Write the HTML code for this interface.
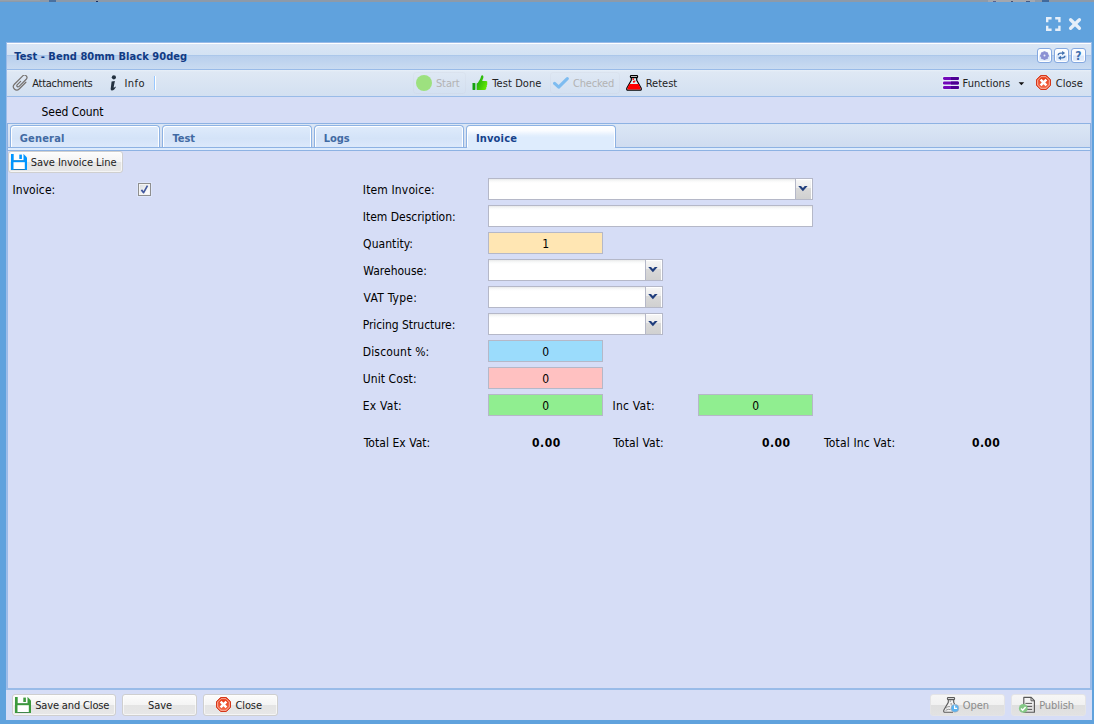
<!DOCTYPE html>
<html>
<head>
<meta charset="utf-8">
<title>Test - Bend 80mm Black 90deg</title>
<style>
html,body{margin:0;padding:0;}
body{width:1094px;height:724px;overflow:hidden;background:#60a2dd;position:relative;
  font-family:"Liberation Sans",sans-serif;font-size:12px;color:#000;}
div,svg{position:absolute;box-sizing:border-box;}
.tx{white-space:nowrap;line-height:14px;}
#topstrip{left:0;top:0;width:1094px;height:2px;background:#8d9aa9;}
#panel{left:6px;top:42px;width:1086px;height:678px;background:#d6ddf6;}
#hdr{left:6px;top:42px;width:1086px;height:28px;border:1px solid #99bbe8;
  background:linear-gradient(#fff 0,#fff 1px,#dae6f5 1px,#d3e2f3 12px,#abc7ea 12px,#abc7ea 13px,#b8cfed 13px,#c9dbf1 26px);}
#tb{left:6px;top:70px;width:1086px;height:27px;border:1px solid #99bbe8;border-top:none;
  background:linear-gradient(#e8eff8 0,#dfe8f4 2px,#d3e0f1 100%);}
#mid{left:6px;top:97px;width:1086px;height:26px;border-left:1px solid #9ebde9;border-right:1px solid #9ebde9;}
#body{left:6px;top:123px;width:1086px;height:567px;border-left:1px solid #9ebde9;border-right:1px solid #9ebde9;}
#bodyin{left:7px;top:151px;width:1084px;height:537px;border-left:1px solid #9cbbe8;border-right:1px solid #9cbbe8;}
#strip{left:7px;top:123px;width:1084px;height:25px;border:1px solid #8db2e3;background:linear-gradient(#dbe6f5,#cfdcf0);}
#spacer{left:7px;top:148px;width:1084px;height:3px;background:#deecfd;border:1px solid #8db2e3;border-top:none;}
.tab{top:125px;width:150px;height:22px;border:1px solid #8db2e3;border-bottom:none;border-radius:4px 4px 0 0;
  background:linear-gradient(#dfebfb 0,#d6e5f9 45%,#d4e3f8 60%,#dce9fb 100%);box-shadow:inset 1px 1px 0 #fff,inset -1px 0 0 #fff;}
.tab.act{height:22px;background:linear-gradient(#fff 0,#fafcff 22%,#e3effd 45%,#deecfd 55%,#deecfd 100%);}
.tabgap{top:126px;width:2px;height:21px;background:#dfe8f5;}
.btn{border:1px solid #cfcfcf;border-radius:3px;background:linear-gradient(#fcfcfc 0,#f4f4f4 49%,#e4e4e4 50%,#e7e7e7 100%);box-shadow:inset 0 0 0 1px rgba(255,255,255,.6);}
.btn.dis{border-color:#e4e4e6;background:linear-gradient(#f6f6f6 0,#f1f1f1 49%,#dfdfdf 50%,#e2e2e2 100%);box-shadow:none;}
.tbdis{border:1px solid rgba(190,195,205,.13);border-radius:3px;}
.inp{border:1px solid #b5b8c8;background:linear-gradient(#e9eaea 0,#f8f9f9 2px,#fff 4px,#fff 100%);height:22px;}
.num{border:1px solid #b5b8c8;height:22px;}
.trig{width:18px;height:22px;border:1px solid #b5b8c8;border-left:1px solid #b5b8c8;background:linear-gradient(#f7f7f7 0,#ececec 44%,#d9d9d9 46%,#d0d0d0 100%);box-shadow:inset -1px 1px 0 #fff;}
.tool{top:48px;width:15px;height:15px;border:1px solid #84a8e0;border-radius:3px;background:linear-gradient(#fff 0,#f4f8fe 45%,#d9e7fb 55%,#e6effc 100%);box-shadow:inset 0 0 0 1px #fff;}
#footline{left:7px;top:688px;width:1084px;height:2px;background:#99bbe8;}
#sep{left:154px;top:76px;width:2px;height:14px;border-left:1px solid #98c8ff;border-right:1px solid #fff;}
</style>
</head>
<body>
<div id="topstrip"></div>
<div style="left:0;top:0;width:40px;height:1px;background:#97a0aa"></div>
<div style="left:49px;top:0;width:7px;height:2px;background:#4a709e"></div>
<div style="left:96px;top:1px;width:2px;height:1px;background:#1c2c5e"></div>
<div style="left:988px;top:0;width:47px;height:2px;background:#a4a7ae"></div>
<div style="left:993px;top:1px;width:3px;height:1px;background:#5a628c"></div>
<div style="left:1011px;top:1px;width:2px;height:1px;background:#4a5070"></div>
<div style="left:1026px;top:1px;width:4px;height:1px;background:#4a5a80"></div>
<div style="left:1042px;top:0;width:7px;height:2px;background:#41699b"></div>
<div id="panel"></div>
<div id="hdr"></div>
<div id="tb"></div>
<div id="mid"></div>
<div id="body"></div>
<div id="bodyin"></div>
<div id="strip"></div>
<div id="spacer"></div>
<div class="tab" style="left:10px"></div>
<div class="tab" style="left:162px"></div>
<div class="tab" style="left:314px"></div>
<div class="tab act" style="left:466px"></div>
<div style="left:467px;top:147px;width:148px;height:1px;background:#deecfd"></div>
<div id="footline"></div>
<div id="sep"></div>

<!-- window controls -->
<svg style="left:1046px;top:17px" width="15" height="14" viewBox="0 0 15 14"><path d="M1.2 5.2V1.2H5.6M9.2 1.2H13.4V5.2M13.4 8.8V12.8H9.2M5.6 12.8H1.2V8.8" fill="none" stroke="#e6eff9" stroke-width="2.4"/></svg>
<svg style="left:1068px;top:17px" width="14" height="14" viewBox="0 0 14 14"><path d="M2.6 2.7L11.4 11.3M11.4 2.7L2.6 11.3" fill="none" stroke="#e6eff9" stroke-width="3.3" stroke-linecap="round"/></svg>

<!-- header tools -->
<div class="tool" style="left:1037px"></div>
<div class="tool" style="left:1054px"></div>
<div class="tool" style="left:1071px"></div>
<svg style="left:1039px;top:50px" width="11" height="11" viewBox="0 0 11 11"><g fill="#8b90d3"><circle cx="5.5" cy="5.6" r="3.5"/><g stroke="#8b90d3" stroke-width="2.2"><path d="M5.5 1.2V10M1.1 5.6H9.9M2.4 2.5L8.6 8.7M8.6 2.5L2.4 8.7"/></g></g><circle cx="5.5" cy="5.6" r="1" fill="#e8ecf9"/></svg>
<svg style="left:1056px;top:50px" width="11" height="11" viewBox="0 0 11 11"><g fill="none" stroke="#3f6fae" stroke-width="1.4"><path d="M2.2 5.2C2.3 3.6 3.4 3.1 4.8 3.1H6.6"/><path d="M8.9 5.8C8.8 7.4 7.7 7.9 6.3 7.9H4.5"/></g><path d="M6.1 0.9L9.1 3.1L6.1 5.3Z" fill="#3f6fae"/><path d="M5 5.7L2 7.9L5 10.1Z" fill="#3f6fae"/></svg>

<!-- toolbar icons -->
<svg style="left:12px;top:75px" width="16" height="16" viewBox="0 0 16 16"><path d="M13.89 7.26 L7.17 13.99 A3.38 3.38 0 0 1 2.39 9.21 L10.79 0.80 A2.44 2.44 0 0 1 14.24 4.25 L6.88 11.60 A1.24 1.24 0 0 1 5.14 9.85 L8.65 6.34" fill="none" stroke="#75716e" stroke-width="1.2" stroke-linecap="round"/></svg>
<svg style="left:108px;top:75px" width="10" height="16" viewBox="0 0 10 16"><circle cx="5.9" cy="2.3" r="2.1" fill="#22303f"/><path d="M3.6 6.6 L6.9 6.1 L5.6 12.6 C6.3 12.6 7 12 7.6 11.4 L7.9 11.9 C7 13.6 5.6 15.4 3.9 15.4 C2.6 15.4 2.6 14 2.8 13 Z" fill="#22303f"/></svg>
<div class="tbdis" style="left:413px;top:72px;width:53px;height:22px"></div>
<div style="left:416px;top:75px;width:16px;height:16px;border-radius:8px;background:#9de17f"></div>
<svg style="left:472px;top:75px" width="16" height="16" viewBox="0 0 16 16"><defs><linearGradient id="gth" x1="0" y1="0.2" x2="1" y2="0.9"><stop offset="0" stop-color="#16a512"/><stop offset="1" stop-color="#6cf000"/></linearGradient></defs><rect x="0.5" y="8.1" width="2.6" height="6.8" rx="0.4" fill="#12a20e"/><rect x="3.1" y="8.4" width="1.4" height="6.3" fill="#12a20e" opacity=".35"/><path d="M4.8 15 L4.8 8.6 C6.5 7.5 7.3 5.2 8.4 3.4 C9 2.3 8.9 0.5 10 0.15 C11.3 0 11.7 1.6 11.3 3 C11 4.2 10.4 5 10.2 5.9 L14 5.9 C15.5 5.9 15.7 7.4 15 8 C15.6 8.6 15.4 9.9 14.7 10.3 C15.2 11 14.9 12.1 14.2 12.5 C14.6 13.4 14 15 12.5 15.1 L7 15.1 C6 15.1 5.5 14.8 4.8 15 Z" fill="url(#gth)"/></svg>
<div class="tbdis" style="left:550px;top:72px;width:70px;height:22px"></div>
<svg style="left:553px;top:75px" width="16" height="16" viewBox="0 0 16 16"><path d="M1.6 8.4L5.7 12.1L14.3 3.6" fill="none" stroke="#7ebcf0" stroke-width="3.1" stroke-linecap="round" stroke-linejoin="round"/></svg>
<svg style="left:626px;top:75px" width="16" height="16" viewBox="0 0 16 16"><path d="M5.3 2.3V5.2L0.9 13Q0.2 15.2 2 15.2H14Q15.8 15.2 15.1 13L10.7 5.2V2.3Z" fill="#def3f8" stroke="#000" stroke-width="1.2" stroke-linejoin="round"/><path d="M3.4 9H12.6L14.5 13.1Q15 14.6 13.8 14.6H2.2Q1 14.6 1.5 13.1Z" fill="#fe0000"/><rect x="4.4" y="0.6" width="7.2" height="2" rx="0.8" fill="#fff" stroke="#000" stroke-width="1.2"/><circle cx="7.2" cy="4.1" r="0.9" fill="#fe0000"/><circle cx="7.9" cy="6.7" r="1" fill="#fe0000"/><rect x="7.9" y="5.6" width="1.6" height="1" fill="#fe0000"/></svg>
<svg style="left:942px;top:75px" width="18" height="16" viewBox="0 0 18 16"><rect x="0.2" y="0.8" width="17.4" height="14.2" fill="#eef6fb" opacity=".55"/><g><rect x="1" y="2" width="16" height="2.9" rx="1.3" fill="#7208b9"/><rect x="1" y="6.45" width="16" height="3" rx="1.3" fill="#7208b9"/><rect x="1" y="11.1" width="16" height="2.9" rx="1.3" fill="#7208b9"/><path d="M9 2H15.7Q17 2 17 3.45Q17 4.9 15.7 4.9H9ZM9 6.45H15.7Q17 6.45 17 7.95Q17 9.45 15.7 9.45H9ZM9 11.1H15.7Q17 11.1 17 12.55Q17 14 15.7 14H9Z" fill="#4b0092"/></g></svg>
<svg style="left:1018px;top:82px" width="7" height="4" viewBox="0 0 7 4"><path d="M0.6 0.2H6.2L3.4 3.3Z" fill="#111"/></svg>
<svg style="left:1036px;top:75px" width="16" height="16" viewBox="0 0 16 16"><defs><linearGradient id="gc1036" x1="0" y1="0" x2="0" y2="1"><stop offset="0" stop-color="#e6330f"/><stop offset="1" stop-color="#f4704f"/></linearGradient></defs><path d="M4.6 0.5H10.4L14.5 4.6V10.4L10.4 14.5H4.6L0.5 10.4V4.6Z" fill="url(#gc1036)" stroke="#d4371a" stroke-width="1"/><path d="M5 1.7H10L13.3 5V10L10 13.3H5L1.7 10V5Z" fill="none" stroke="#f9b5a4" stroke-width="1" opacity=".95"/><path d="M4.6 4.6L10.4 10.4M10.4 4.6L4.6 10.4" stroke="#fff" stroke-width="2.5"/></svg>

<!-- tab toolbar button -->
<div class="btn" style="left:8px;top:151px;width:115px;height:22px"></div>
<svg style="left:11px;top:154px" width="16" height="16" viewBox="0 0 16 16"><path d="M0 0H12.6L16 3.4V16H0Z" fill="#0096ff"/><rect x="2.7" y="0" width="9.8" height="6.3" fill="#fdfdfd"/><rect x="8.3" y="0.6" width="2.6" height="4.4" fill="#0096ff"/><rect x="2.5" y="8.2" width="11.3" height="7.1" fill="#fff"/><rect x="2.5" y="15.3" width="11.3" height="0.7" fill="#0a5c99"/><rect x="2.7" y="6.3" width="9.8" height="0.6" fill="#0a5c99" opacity=".6"/></svg>

<!-- checkbox -->
<div style="left:138px;top:183px;width:13px;height:13px;border:1px solid #8f8f8f;background:linear-gradient(135deg,#d4d9de,#f6f6f6 60%,#fff);box-shadow:inset 0 0 0 1px #f4f4f4,0 0 0 1px rgba(225,233,253,.7)"></div>
<svg style="left:138px;top:183px" width="13" height="13" viewBox="0 0 13 13"><path d="M3.4 6.9L5.6 9.6L9.5 2.7" fill="none" stroke="#43599f" stroke-width="1.7" stroke-linejoin="round"/></svg>

<!-- form fields -->
<div class="inp" style="left:488px;top:178px;width:308px"></div><div class="trig" style="left:795px;top:178px"></div>
<div class="inp" style="left:488px;top:205px;width:325px"></div>
<div class="num" style="left:488px;top:232px;width:115px;background:#ffe6b3"></div>
<div class="inp" style="left:488px;top:259px;width:158px"></div><div class="trig" style="left:645px;top:259px"></div>
<div class="inp" style="left:488px;top:286px;width:158px"></div><div class="trig" style="left:645px;top:286px"></div>
<div class="inp" style="left:488px;top:313px;width:158px"></div><div class="trig" style="left:645px;top:313px"></div>
<div class="num" style="left:488px;top:340px;width:115px;background:#9bdcfc"></div>
<div class="num" style="left:488px;top:367px;width:115px;background:#ffc1c1"></div>
<div class="num" style="left:488px;top:394px;width:115px;background:#90ee90"></div>
<div class="num" style="left:698px;top:394px;width:115px;background:#90ee90"></div>
<svg style="left:798.3px;top:185.9px" width="10" height="6" viewBox="0 0 10 6"><path d="M0.2 0H3L4.9 1.9L6.8 0H9.6L4.9 5.2Z" fill="#1f3d7c"/></svg>
<svg style="left:648.3px;top:266.9px" width="10" height="6" viewBox="0 0 10 6"><path d="M0.2 0H3L4.9 1.9L6.8 0H9.6L4.9 5.2Z" fill="#1f3d7c"/></svg>
<svg style="left:648.3px;top:293.9px" width="10" height="6" viewBox="0 0 10 6"><path d="M0.2 0H3L4.9 1.9L6.8 0H9.6L4.9 5.2Z" fill="#1f3d7c"/></svg>
<svg style="left:648.3px;top:320.9px" width="10" height="6" viewBox="0 0 10 6"><path d="M0.2 0H3L4.9 1.9L6.8 0H9.6L4.9 5.2Z" fill="#1f3d7c"/></svg>

<!-- bottom buttons -->
<div class="btn" style="left:12px;top:694px;width:104px;height:22px"></div>
<div class="btn" style="left:122px;top:694px;width:75px;height:22px"></div>
<div class="btn" style="left:203px;top:694px;width:75px;height:22px"></div>
<div class="btn dis" style="left:930px;top:694px;width:75px;height:22px"></div>
<div class="btn dis" style="left:1011px;top:694px;width:75px;height:22px"></div>
<svg style="left:15px;top:697px" width="16" height="16" viewBox="0 0 16 16"><path d="M0 0H12.6L16 3.4V16H0Z" fill="#3c9a3c"/><rect x="2.7" y="0" width="9.8" height="6.3" fill="#fdfdfd"/><rect x="8.3" y="0.6" width="2.6" height="4.4" fill="#3c9a3c"/><rect x="2.5" y="8.2" width="11.3" height="7.1" fill="#fff"/><rect x="2.5" y="15.3" width="11.3" height="0.7" fill="#2a6e3a"/><rect x="2.7" y="6.3" width="9.8" height="0.6" fill="#2a6e3a" opacity=".6"/></svg>
<svg style="left:216px;top:697px" width="16" height="16" viewBox="0 0 16 16"><defs><linearGradient id="gc216" x1="0" y1="0" x2="0" y2="1"><stop offset="0" stop-color="#e6330f"/><stop offset="1" stop-color="#f4704f"/></linearGradient></defs><path d="M4.6 0.5H10.4L14.5 4.6V10.4L10.4 14.5H4.6L0.5 10.4V4.6Z" fill="url(#gc216)" stroke="#d4371a" stroke-width="1"/><path d="M5 1.7H10L13.3 5V10L10 13.3H5L1.7 10V5Z" fill="none" stroke="#f9b5a4" stroke-width="1" opacity=".95"/><path d="M4.6 4.6L10.4 10.4M10.4 4.6L4.6 10.4" stroke="#fff" stroke-width="2.5"/></svg>
<svg style="left:943px;top:697px" width="18" height="17" viewBox="0 0 18 17"><path d="M5.3 2.3V5.4L0.9 13Q0.2 15.2 2 15.2H10" fill="#f1f1f1" stroke="#5a5a5a" stroke-width="1.1" stroke-linejoin="round"/><path d="M10.7 2.3V5.4L11.6 7" fill="none" stroke="#5a5a5a" stroke-width="1.1"/><rect x="4.4" y="0.6" width="7.2" height="2" rx="0.8" fill="#fff" stroke="#5a5a5a" stroke-width="1.1"/><path d="M3 11.2Q4.6 9 7 9.6M2.6 13.4Q5.4 11.6 7.6 12.6" fill="none" stroke="#8a8a8a" stroke-width=".9"/><rect x="6.7" y="3.6" width="1.2" height="1" fill="#777"/><rect x="7.5" y="6.4" width="1.4" height="1.1" fill="#777"/><circle cx="11.9" cy="11.3" r="3.95" fill="#5ab4f2" stroke="#c9a8a0" stroke-width=".5"/><path d="M11.6 8.5V11.3H14.1" fill="none" stroke="#fff" stroke-width="1.2"/></svg>
<svg style="left:1018px;top:696px" width="19" height="18" viewBox="0 0 19 18"><path d="M5.8 1.4H13.2L16.4 4.6V16.2H5.8Z" fill="none" stroke="#585858" stroke-width="1.15" stroke-linejoin="round"/><path d="M13 1.6V4.8H16.2" fill="none" stroke="#585858" stroke-width="1"/><path d="M7.4 7.4H14.1M7.4 10.4H14.1M7.4 13.4H14.1" stroke="#585858" stroke-width="1"/><circle cx="5.3" cy="12.4" r="4.4" fill="#84c886"/><path d="M3 12.5L4.7 14.2L7.6 10.9" fill="none" stroke="#fff" stroke-width="1.5"/></svg>

<div class="tx" id="title" style="left:14.35px;top:50.00px;font:bold 11px 'DejaVu Sans Condensed','Liberation Sans',sans-serif;color:#113b84;letter-spacing:0.049px;">Test - Bend 80mm Black 90deg</div>
<div class="tx" id="tAtt" style="left:32.22px;top:77.00px;font:normal 11px 'DejaVu Sans Condensed','Liberation Sans',sans-serif;color:#222;letter-spacing:-0.259px;">Attachments</div>
<div class="tx" id="tInfo" style="left:124.53px;top:77.00px;font:normal 11px 'DejaVu Sans Condensed','Liberation Sans',sans-serif;color:#222;letter-spacing:0.427px;">Info</div>
<div class="tx" id="tStart" style="left:435.95px;top:77.00px;font:normal 11px 'DejaVu Sans Condensed','Liberation Sans',sans-serif;color:#b3b3b3;letter-spacing:-0.097px;">Start</div>
<div class="tx" id="tDone" style="left:492.33px;top:77.00px;font:normal 11px 'DejaVu Sans Condensed','Liberation Sans',sans-serif;color:#222;letter-spacing:0.078px;">Test Done</div>
<div class="tx" id="tChk" style="left:573.05px;top:77.00px;font:normal 11px 'DejaVu Sans Condensed','Liberation Sans',sans-serif;color:#b3b3b3;letter-spacing:-0.214px;">Checked</div>
<div class="tx" id="tRet" style="left:645.73px;top:77.00px;font:normal 11px 'DejaVu Sans Condensed','Liberation Sans',sans-serif;color:#222;letter-spacing:0.005px;">Retest</div>
<div class="tx" id="tFun" style="left:962.53px;top:77.00px;font:normal 11px 'DejaVu Sans Condensed','Liberation Sans',sans-serif;color:#222;letter-spacing:0.044px;">Functions</div>
<div class="tx" id="tCls" style="left:1055.75px;top:77.00px;font:normal 11px 'DejaVu Sans Condensed','Liberation Sans',sans-serif;color:#222;letter-spacing:0.029px;">Close</div>
<div class="tx" id="seed" style="left:41.59px;top:105.00px;font:normal 12px 'DejaVu Sans Condensed','Liberation Sans',sans-serif;color:#000;letter-spacing:-0.059px;">Seed Count</div>
<div class="tx" id="tab1" style="left:19.81px;top:132.00px;font:bold 11px 'DejaVu Sans Condensed','Liberation Sans',sans-serif;color:#416aa3;letter-spacing:0.179px;">General</div>
<div class="tx" id="tab2" style="left:172.55px;top:132.00px;font:bold 11px 'DejaVu Sans Condensed','Liberation Sans',sans-serif;color:#416aa3;letter-spacing:-0.051px;">Test</div>
<div class="tx" id="tab3" style="left:323.69px;top:132.00px;font:bold 11px 'DejaVu Sans Condensed','Liberation Sans',sans-serif;color:#416aa3;letter-spacing:-0.002px;">Logs</div>
<div class="tx" id="tab4" style="left:475.89px;top:132.00px;font:bold 11px 'DejaVu Sans Condensed','Liberation Sans',sans-serif;color:#15428b;letter-spacing:0.190px;">Invoice</div>
<div class="tx" id="bSIL" style="left:30.65px;top:156.00px;font:normal 11px 'DejaVu Sans Condensed','Liberation Sans',sans-serif;color:#222;letter-spacing:-0.038px;">Save Invoice Line</div>
<div class="tx" id="lInv" style="left:12.45px;top:183.00px;font:normal 12px 'DejaVu Sans Condensed','Liberation Sans',sans-serif;color:#000;letter-spacing:0.083px;">Invoice:</div>
<div class="tx" id="lII" style="left:362.85px;top:183.00px;font:normal 12px 'DejaVu Sans Condensed','Liberation Sans',sans-serif;color:#000;letter-spacing:0.140px;">Item Invoice:</div>
<div class="tx" id="lID" style="left:362.85px;top:210.00px;font:normal 12px 'DejaVu Sans Condensed','Liberation Sans',sans-serif;color:#000;letter-spacing:-0.020px;">Item Description:</div>
<div class="tx" id="lQ" style="left:363.10px;top:237.00px;font:normal 12px 'DejaVu Sans Condensed','Liberation Sans',sans-serif;color:#000;letter-spacing:0.056px;">Quantity:</div>
<div class="tx" id="lW" style="left:363.34px;top:264.00px;font:normal 12px 'DejaVu Sans Condensed','Liberation Sans',sans-serif;color:#000;letter-spacing:-0.002px;">Warehouse:</div>
<div class="tx" id="lV" style="left:363.62px;top:291.00px;font:normal 12px 'DejaVu Sans Condensed','Liberation Sans',sans-serif;color:#000;letter-spacing:0.238px;">VAT Type:</div>
<div class="tx" id="lP" style="left:362.65px;top:318.00px;font:normal 12px 'DejaVu Sans Condensed','Liberation Sans',sans-serif;color:#000;letter-spacing:-0.054px;">Pricing Structure:</div>
<div class="tx" id="lD" style="left:362.65px;top:345.00px;font:normal 12px 'DejaVu Sans Condensed','Liberation Sans',sans-serif;color:#000;letter-spacing:0.189px;">Discount %:</div>
<div class="tx" id="lU" style="left:362.76px;top:372.00px;font:normal 12px 'DejaVu Sans Condensed','Liberation Sans',sans-serif;color:#000;letter-spacing:0.084px;">Unit Cost:</div>
<div class="tx" id="lE" style="left:362.65px;top:399.00px;font:normal 12px 'DejaVu Sans Condensed','Liberation Sans',sans-serif;color:#000;letter-spacing:0.257px;">Ex Vat:</div>
<div class="tx" id="lIV" style="left:612.45px;top:399.00px;font:normal 12px 'DejaVu Sans Condensed','Liberation Sans',sans-serif;color:#000;letter-spacing:0.256px;">Inc Vat:</div>
<div class="tx" id="lT1" style="left:363.73px;top:436.00px;font:normal 12px 'DejaVu Sans Condensed','Liberation Sans',sans-serif;color:#000;letter-spacing:0.044px;">Total Ex Vat:</div>
<div class="tx" id="lT2" style="left:613.33px;top:436.00px;font:normal 12px 'DejaVu Sans Condensed','Liberation Sans',sans-serif;color:#000;letter-spacing:0.118px;">Total Vat:</div>
<div class="tx" id="lT3" style="left:824.03px;top:436.00px;font:normal 12px 'DejaVu Sans Condensed','Liberation Sans',sans-serif;color:#000;letter-spacing:0.175px;">Total Inc Vat:</div>
<div class="tx" id="v1" style="left:532.08px;top:436.00px;font:bold 12px 'DejaVu Sans Condensed','Liberation Sans',sans-serif;color:#000;letter-spacing:0.530px;">0.00</div>
<div class="tx" id="v2" style="left:762.08px;top:436.00px;font:bold 12px 'DejaVu Sans Condensed','Liberation Sans',sans-serif;color:#000;letter-spacing:0.430px;">0.00</div>
<div class="tx" id="v3" style="left:971.98px;top:436.00px;font:bold 12px 'DejaVu Sans Condensed','Liberation Sans',sans-serif;color:#000;letter-spacing:0.396px;">0.00</div>
<div class="tx" id="nQ" style="left:542.22px;top:237.00px;font:normal 12px 'DejaVu Sans Condensed','Liberation Sans',sans-serif;color:#000;">1</div>
<div class="tx" id="nD" style="left:542.17px;top:345.00px;font:normal 12px 'DejaVu Sans Condensed','Liberation Sans',sans-serif;color:#000;">0</div>
<div class="tx" id="nU" style="left:542.17px;top:372.00px;font:normal 12px 'DejaVu Sans Condensed','Liberation Sans',sans-serif;color:#000;">0</div>
<div class="tx" id="nE" style="left:542.17px;top:399.00px;font:normal 12px 'DejaVu Sans Condensed','Liberation Sans',sans-serif;color:#000;">0</div>
<div class="tx" id="nI" style="left:752.17px;top:399.00px;font:normal 12px 'DejaVu Sans Condensed','Liberation Sans',sans-serif;color:#000;">0</div>
<div class="tx" id="bSC" style="left:35.15px;top:699.00px;font:normal 11px 'DejaVu Sans Condensed','Liberation Sans',sans-serif;color:#222;letter-spacing:-0.145px;">Save and Close</div>
<div class="tx" id="bS" style="left:148.05px;top:699.00px;font:normal 11px 'DejaVu Sans Condensed','Liberation Sans',sans-serif;color:#222;letter-spacing:-0.106px;">Save</div>
<div class="tx" id="bC" style="left:235.45px;top:699.00px;font:normal 11px 'DejaVu Sans Condensed','Liberation Sans',sans-serif;color:#222;letter-spacing:-0.096px;">Close</div>
<div class="tx" id="bO" style="left:962.75px;top:699.00px;font:normal 11px 'DejaVu Sans Condensed','Liberation Sans',sans-serif;color:#8c8c8c;letter-spacing:-0.015px;">Open</div>
<div class="tx" id="bP" style="left:1039.13px;top:699.00px;font:normal 11px 'DejaVu Sans Condensed','Liberation Sans',sans-serif;color:#8c8c8c;letter-spacing:-0.043px;">Publish</div>
<div class="tx" id="help" style="left:1075.30px;top:48.70px;font:bold 12px 'DejaVu Sans Condensed','Liberation Sans',sans-serif;color:#3f6fae;">?</div>
</body>
</html>
